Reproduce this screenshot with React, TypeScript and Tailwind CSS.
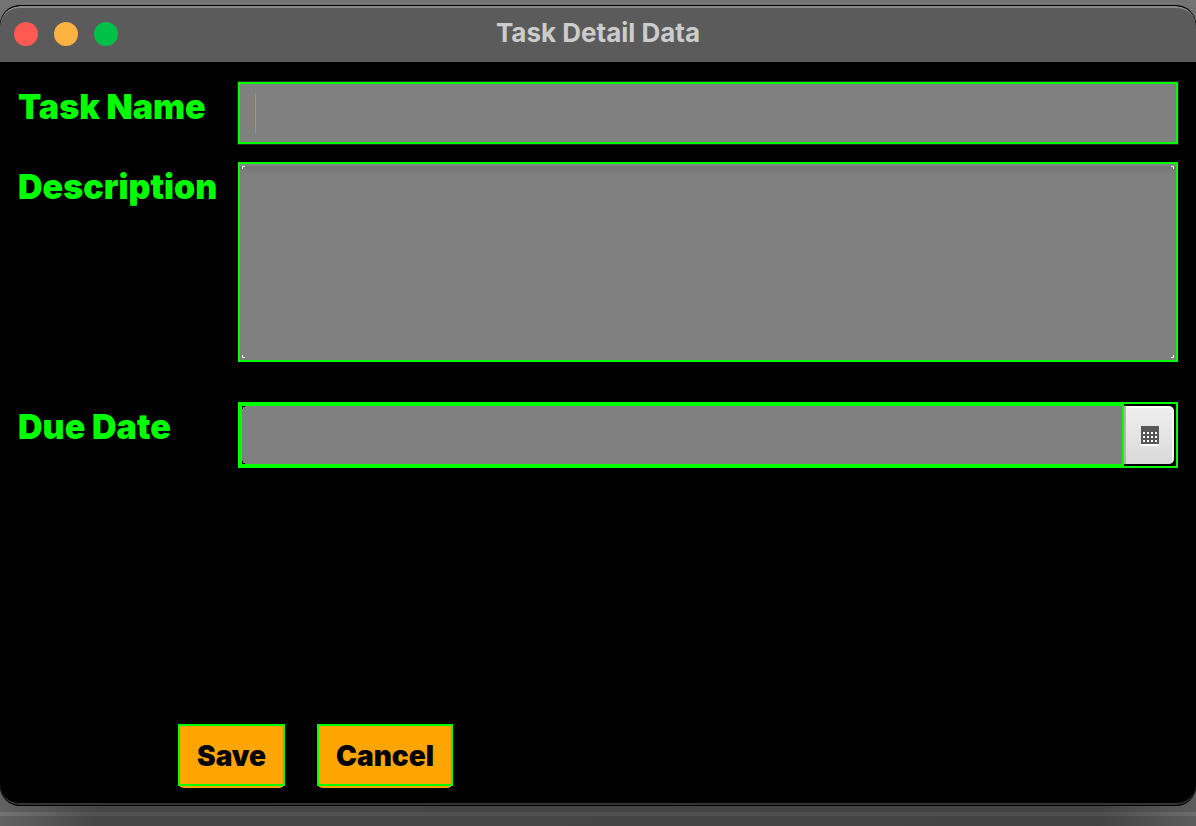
import { useState } from "react";

const labelClass =
  "pt-1 font-['Inter',sans-serif] text-[34px] leading-[42px] font-black whitespace-nowrap text-[#00ff00]";

const actionClass =
  "h-16 rounded-b-md bg-[#ffa500] font-['Inter',sans-serif] text-[28px] font-black text-black";

const actionInnerClass =
  "mb-0.5 flex h-[62px] items-center justify-center border-2 border-[#00ff00] px-[17px] pt-0.5";

function CalendarIcon() {
  const columns = [2, 6, 10, 14];
  const rows = [6, 10, 14];
  return (
    <svg width="18" height="20" viewBox="0 0 18 20" shapeRendering="crispEdges" aria-hidden="true">
      <rect width="18" height="18" fill="#575757" />
      <rect y="18" width="18" height="2" fill="#ffffff" />
      {rows.map((y) =>
        columns.map((x) => <rect key={`${x}-${y}`} x={x} y={y} width="2" height="2" fill="#ffffff" />),
      )}
    </svg>
  );
}

function CornerMarks({ color }: { color: string }) {
  const d = "M0 3V0H3V1H1V3Z";
  return (
    <div className="pointer-events-none absolute inset-1" aria-hidden="true">
      <svg className="absolute top-0 left-0" width="3" height="3" fill={color}>
        <path d={d} />
      </svg>
      <svg className="absolute top-0 right-0 rotate-90" width="3" height="3" fill={color}>
        <path d={d} />
      </svg>
      <svg className="absolute right-0 bottom-0 rotate-180" width="3" height="3" fill={color}>
        <path d={d} />
      </svg>
      <svg className="absolute bottom-0 left-0 -rotate-90" width="3" height="3" fill={color}>
        <path d={d} />
      </svg>
    </div>
  );
}

export default function App() {
  const [name, setName] = useState("");
  const [description, setDescription] = useState("");
  const [dueDate, setDueDate] = useState("");

  return (
    <div className="flex min-h-screen flex-col bg-[linear-gradient(to_right,#626262,#464646_8%,#434343_92%,#5c5c5c)]">
      <div className="flex grow flex-col bg-[linear-gradient(to_bottom,#747474_0,#707070_40px,transparent_60px)] pt-[5px]">
        <main className="flex grow flex-col overflow-hidden rounded-[20px] border-y border-black bg-black">
          <div className="flex grow flex-col overflow-hidden rounded-[20px] border-b-2 border-[#333333]">
            <header className="grid h-14 shrink-0 grid-cols-[1fr_auto_1fr] items-center rounded-t-[20px] border-t-2 border-[#8c8c8c] bg-[#5b5b5b] px-3.5 pb-0.5">
              <div className="flex gap-4">
                <button type="button" aria-label="Close" className="size-6 rounded-full bg-[#ff5a52]" />
                <button type="button" aria-label="Minimize" className="size-6 rounded-full bg-[#ffb341]" />
                <button type="button" aria-label="Zoom" className="size-6 rounded-full bg-[#00c147]" />
              </div>
              <h1 className="pb-0.5 font-['Inter',sans-serif] text-[26px] leading-8 font-bold text-[#cccccc]">
                Task Detail Data
              </h1>
            </header>

            <form className="flex grow flex-col pt-5 pb-[15px]" onSubmit={(e) => e.preventDefault()}>
              <div className="grid grid-cols-[200px_1fr] gap-x-5 pr-[18px] pl-[18px]">
                <label htmlFor="task-name" className={labelClass}>
                  Task Name
                </label>
                <div className="mb-[18px] flex h-[62px] items-center border-2 border-[#00ff00] bg-[#808080] pl-[15px] outline outline-[#262626]">
                  <span className="h-10 w-px bg-[#00ff00]" aria-hidden="true" />
                  <input
                    id="task-name"
                    type="text"
                    value={name}
                    onChange={(e) => setName(e.target.value)}
                    className="h-full min-w-0 grow bg-transparent text-[26px] text-black outline-none"
                  />
                </div>

                <label htmlFor="description" className={labelClass}>
                  Description
                </label>
                <div className="relative mb-10 h-[200px]">
                  <textarea
                    id="description"
                    value={description}
                    onChange={(e) => setDescription(e.target.value)}
                    className="block size-full resize-none border-2 border-[#00ff00] bg-[#808080] bg-[linear-gradient(to_bottom,#858585_0,#858585_2px,#747474_2px,#808080_10px)] p-3 text-[26px] text-black outline-none"
                  />
                  <CornerMarks color="#e8e8e8" />
                </div>

                <label htmlFor="due-date" className={labelClass}>
                  Due Date
                </label>
                <div className="relative flex h-[66px] border-2 border-[#00ff00] bg-black">
                  <input
                    id="due-date"
                    type="text"
                    value={dueDate}
                    onChange={(e) => setDueDate(e.target.value)}
                    className="min-w-0 grow border-2 border-[#00ff00] bg-[#808080] px-3 text-[26px] text-black outline-none"
                  />
                  <button
                    type="button"
                    aria-label="Choose date"
                    className="my-0.5 mr-0.5 flex w-[50px] items-center justify-center rounded-r-[5px] border-t-2 border-r-2 border-l-2 border-t-white border-r-[#f4f4f4] border-l-[#b4b4b4] bg-[linear-gradient(to_bottom,#eeeeee,#d9d9d9)] pl-0.5"
                  >
                    <CalendarIcon />
                  </button>
                  <svg className="absolute top-0.5 left-0.5" width="3" height="3" aria-hidden="true">
                    <path d="M0 3V0H3V1H1V3Z" fill="#000000" />
                  </svg>
                  <svg className="absolute bottom-0.5 left-0.5" width="3" height="3" aria-hidden="true">
                    <path d="M0 0V3H3V2H1V0Z" fill="#000000" />
                  </svg>
                </div>
              </div>

              <div className="mt-auto flex gap-8 pl-[178px]">
                <button type="submit" className={actionClass}>
                  <span className={actionInnerClass}>Save</span>
                </button>
                <button type="button" className={actionClass}>
                  <span className={actionInnerClass}>Cancel</span>
                </button>
              </div>
            </form>
          </div>
        </main>
      </div>
      <div className="h-5 shrink-0 pt-1.5" aria-hidden="true">
        <div className="h-1 bg-[linear-gradient(to_right,#747474,#515151_8%,#4e4e4e_92%,#6c6c6c)]" />
      </div>
    </div>
  );
}
